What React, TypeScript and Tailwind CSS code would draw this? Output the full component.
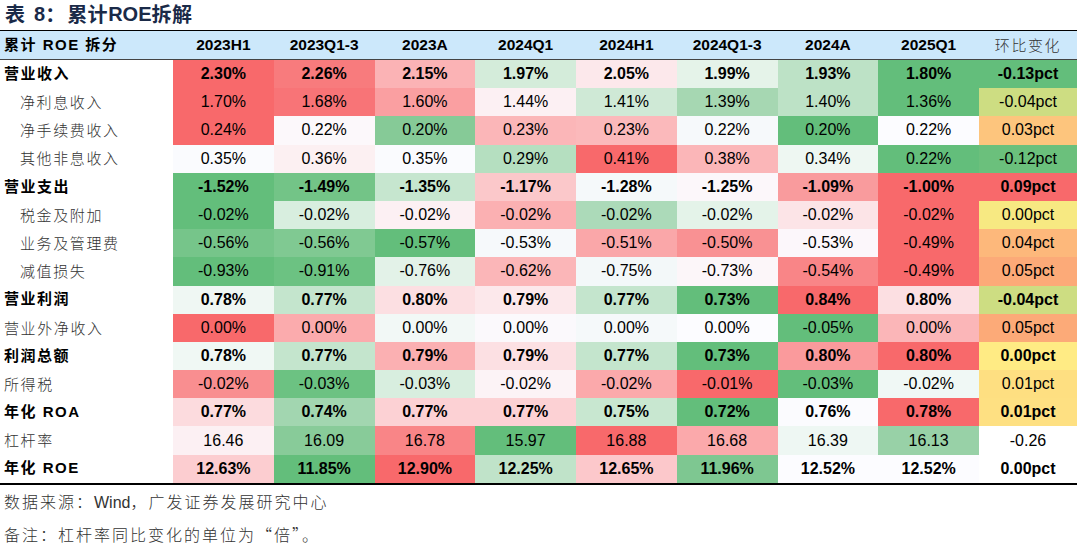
import React from 'react';

type Kind = 'bold' | 'sub' | 'plain';
type Cell = [string, string];
type Row = { label: string; kind: Kind; cells: Cell[] };

const COLUMNS = ['2023H1', '2023Q1-3', '2023A', '2024Q1', '2024H1', '2024Q1-3', '2024A', '2025Q1'];

// colours read off the Excel colour scale, one per cell
const ROWS: Row[] = [
  {
    label: '营业收入', kind: 'bold', cells: [
      ['2.30%', 'bg-[#f8696b]'], ['2.26%', 'bg-[#f87b7d]'], ['2.15%', 'bg-[#fbb3b5]'], ['1.97%', 'bg-[#d4ecda]'],
      ['2.05%', 'bg-[#fce8eb]'], ['1.99%', 'bg-[#e5f3e9]'], ['1.93%', 'bg-[#bde2c6]'], ['1.80%', 'bg-[#63be7b]'],
      ['-0.13pct', 'bg-[#63be7b]'],
    ],
  },
  {
    label: '净利息收入', kind: 'sub', cells: [
      ['1.70%', 'bg-[#f8696b]'], ['1.68%', 'bg-[#f87477]'], ['1.60%', 'bg-[#fa9fa1]'], ['1.44%', 'bg-[#fcf0f3]'],
      ['1.41%', 'bg-[#cfe9d6]'], ['1.39%', 'bg-[#a6d7b2]'], ['1.40%', 'bg-[#bde2c6]'], ['1.36%', 'bg-[#63be7b]'],
      ['-0.04pct', 'bg-[#cddd82]'],
    ],
  },
  {
    label: '净手续费收入', kind: 'sub', cells: [
      ['0.24%', 'bg-[#f8696b]'], ['0.22%', 'bg-[#fcf8fb]'], ['0.20%', 'bg-[#86ca97]'], ['0.23%', 'bg-[#fbb6b8]'],
      ['0.23%', 'bg-[#fbb9bb]'], ['0.22%', 'bg-[#f6f9fb]'], ['0.20%', 'bg-[#63be7b]'], ['0.22%', 'bg-[#fcfcff]'],
      ['0.03pct', 'bg-[#fdc57d]'],
    ],
  },
  {
    label: '其他非息收入', kind: 'sub', cells: [
      ['0.35%', 'bg-[#fafbfe]'], ['0.36%', 'bg-[#fcf0f2]'], ['0.35%', 'bg-[#fafbfe]'], ['0.29%', 'bg-[#b5dfc0]'],
      ['0.41%', 'bg-[#f8696b]'], ['0.38%', 'bg-[#fbb6b8]'], ['0.34%', 'bg-[#eef7f2]'], ['0.22%', 'bg-[#63be7b]'],
      ['-0.12pct', 'bg-[#6bc07c]'],
    ],
  },
  {
    label: '营业支出', kind: 'bold', cells: [
      ['-1.52%', 'bg-[#63be7b]'], ['-1.49%', 'bg-[#73c487]'], ['-1.35%', 'bg-[#c6e6cf]'], ['-1.17%', 'bg-[#fbc8ca]'],
      ['-1.28%', 'bg-[#f5f9fa]'], ['-1.25%', 'bg-[#fcf7fa]'], ['-1.09%', 'bg-[#f99b9d]'], ['-1.00%', 'bg-[#f8696b]'],
      ['0.09pct', 'bg-[#f8696b]'],
    ],
  },
  {
    label: '税金及附加', kind: 'sub', cells: [
      ['-0.02%', 'bg-[#63be7b]'], ['-0.02%', 'bg-[#d8eedf]'], ['-0.02%', 'bg-[#fcf0f3]'], ['-0.02%', 'bg-[#fbb0b2]'],
      ['-0.02%', 'bg-[#acdab9]'], ['-0.02%', 'bg-[#e4f3e9]'], ['-0.02%', 'bg-[#fce4e7]'], ['-0.02%', 'bg-[#f8696b]'],
      ['0.00pct', 'bg-[#f7e982]'],
    ],
  },
  {
    label: '业务及管理费', kind: 'sub', cells: [
      ['-0.56%', 'bg-[#76c58a]'], ['-0.56%', 'bg-[#80c992]'], ['-0.57%', 'bg-[#63be7b]'], ['-0.53%', 'bg-[#f6f9fb]'],
      ['-0.51%', 'bg-[#faa7a9]'], ['-0.50%', 'bg-[#f99193]'], ['-0.53%', 'bg-[#fcf7fb]'], ['-0.49%', 'bg-[#f8696b]'],
      ['0.04pct', 'bg-[#fdb87b]'],
    ],
  },
  {
    label: '减值损失', kind: 'sub', cells: [
      ['-0.93%', 'bg-[#63be7b]'], ['-0.91%', 'bg-[#6cc282]'], ['-0.76%', 'bg-[#e3f2e8]'], ['-0.62%', 'bg-[#fbb6b8]'],
      ['-0.75%', 'bg-[#f3f8f9]'], ['-0.73%', 'bg-[#fcf6f9]'], ['-0.54%', 'bg-[#f98587]'], ['-0.49%', 'bg-[#f8696b]'],
      ['0.05pct', 'bg-[#fcaa78]'],
    ],
  },
  {
    label: '营业利润', kind: 'bold', cells: [
      ['0.78%', 'bg-[#eff7f3]'], ['0.77%', 'bg-[#c4e5cd]'], ['0.80%', 'bg-[#fcdfe2]'], ['0.79%', 'bg-[#fce8eb]'],
      ['0.77%', 'bg-[#c4e5cd]'], ['0.73%', 'bg-[#63be7b]'], ['0.84%', 'bg-[#f8696b]'], ['0.80%', 'bg-[#fcdfe2]'],
      ['-0.04pct', 'bg-[#cddd82]'],
    ],
  },
  {
    label: '营业外净收入', kind: 'plain', cells: [
      ['0.00%', 'bg-[#f8696b]'], ['0.00%', 'bg-[#fbabad]'], ['0.00%', 'bg-[#f2f8f6]'], ['0.00%', 'bg-[#fbf9fc]'],
      ['0.00%', 'bg-[#f5f9fa]'], ['0.00%', 'bg-[#fcfcff]'], ['-0.05%', 'bg-[#63be7b]'], ['0.00%', 'bg-[#fbb6b8]'],
      ['0.05pct', 'bg-[#fcaa78]'],
    ],
  },
  {
    label: '利润总额', kind: 'bold', cells: [
      ['0.78%', 'bg-[#f0f8f4]'], ['0.77%', 'bg-[#c4e5cd]'], ['0.79%', 'bg-[#fbb0b2]'], ['0.79%', 'bg-[#fce0e3]'],
      ['0.77%', 'bg-[#c4e5cd]'], ['0.73%', 'bg-[#63be7b]'], ['0.80%', 'bg-[#fa9a9c]'], ['0.80%', 'bg-[#f8696b]'],
      ['0.00pct', 'bg-[#ffeb84]'],
    ],
  },
  {
    label: '所得税', kind: 'plain', cells: [
      ['-0.02%', 'bg-[#f98e90]'], ['-0.03%', 'bg-[#6cc282]'], ['-0.03%', 'bg-[#d8eedf]'], ['-0.02%', 'bg-[#fcf3f6]'],
      ['-0.02%', 'bg-[#fba9ab]'], ['-0.01%', 'bg-[#f8696b]'], ['-0.03%', 'bg-[#63be7b]'], ['-0.02%', 'bg-[#f0f8f5]'],
      ['0.01pct', 'bg-[#fedf81]'],
    ],
  },
  {
    label: '年化 ROA', kind: 'bold', cells: [
      ['0.77%', 'bg-[#fcdbde]'], ['0.74%', 'bg-[#a2d6b0]'], ['0.77%', 'bg-[#fcd1d4]'], ['0.77%', 'bg-[#fcd1d4]'],
      ['0.75%', 'bg-[#c8e7d0]'], ['0.72%', 'bg-[#63be7b]'], ['0.76%', 'bg-[#fbfbfe]'], ['0.78%', 'bg-[#f8696b]'],
      ['0.01pct', 'bg-[#fee082]'],
    ],
  },
  {
    label: '杠杆率', kind: 'plain', cells: [
      ['16.46', 'bg-[#fcf0f3]'], ['16.09', 'bg-[#88cb99]'], ['16.78', 'bg-[#f98587]'], ['15.97', 'bg-[#63be7b]'],
      ['16.88', 'bg-[#f8696b]'], ['16.68', 'bg-[#fba9ab]'], ['16.39', 'bg-[#eef7f3]'], ['16.13', 'bg-[#98d1a7]'],
      ['-0.26', 'bg-white'],
    ],
  },
  {
    label: '年化 ROE', kind: 'bold', cells: [
      ['12.63%', 'bg-[#fccdd0]'], ['11.85%', 'bg-[#63be7b]'], ['12.90%', 'bg-[#f8696b]'], ['12.25%', 'bg-[#c0e3c9]'],
      ['12.65%', 'bg-[#fcc8cb]'], ['11.96%', 'bg-[#7ec791]'], ['12.52%', 'bg-[#fcfcff]'], ['12.52%', 'bg-[#fcfcff]'],
      ['0.00pct', 'bg-white'],
    ],
  },
];

const GRID = 'grid grid-cols-[173px_repeat(8,100.75px)_98px]';
const CJK = "font-['Noto_Sans_CJK_SC',sans-serif]";
const NUM = "font-['Liberation_Sans','Noto_Sans_CJK_SC',sans-serif]";

function RowLabel({ row }: { row: Row }) {
  if (row.kind === 'bold') {
    return (
      <div className={`${NUM} flex items-center pl-[4px] text-[15px] font-bold tracking-[1.5px] text-black`}>
        {row.label}
      </div>
    );
  }
  return (
    <div
      className={`${CJK} flex items-center text-[15px] font-light tracking-[1.6px] text-[#333] ${
        row.kind === 'sub' ? 'pl-[20px]' : 'pl-[4px]'
      }`}
    >
      {row.label}
    </div>
  );
}

export default function App() {
  return (
    <div className="h-[545px] w-[1080px] overflow-hidden bg-white">
      <div className={`${CJK} flex h-[30px] items-center pl-[5px] pb-[3px] text-[20px] font-bold text-[#1a2a48]`}>
        <span>表</span>
        <span className="ml-[9px] font-['Liberation_Sans']">8</span>
        <span>：</span>
        <span className="ml-[2px] tracking-[0.5px]">累计</span>
        <span className="font-['Liberation_Sans']">ROE</span>
        <span className="tracking-[0.5px]">拆解</span>
      </div>

      <div className="w-[1077px]">
        <div className={`${GRID} h-[30px] border-t-[1.5px] border-b border-t-black border-b-[#444] bg-[#cce8fb]`}>
          <div className={`${NUM} flex items-center pl-[4px] text-[15px] font-bold tracking-[1.5px] text-black`}>
            累计 ROE 拆分
          </div>
          {COLUMNS.map(c => (
            <div key={c} className={`${NUM} flex items-center justify-center text-[15.5px] font-bold text-black`}>
              {c}
            </div>
          ))}
          <div className={`${CJK} flex items-center justify-center text-[15px] font-light tracking-[1.6px] text-[#333]`}>
            环比变化
          </div>
        </div>

        {ROWS.map(row => (
          <div key={row.label} className={`${GRID} h-[28.2px]`}>
            <RowLabel row={row} />
            {row.cells.map(([v, bg], i) => (
              <div
                key={i}
                className={`${NUM} ${bg} flex items-center justify-center text-[16px] text-black ${
                  row.kind === 'bold' ? 'font-bold' : 'text-[#1a1a1a]'
                }`}
              >
                {v}
              </div>
            ))}
          </div>
        ))}
        <div className="h-[2px] bg-black" />
      </div>

      <div className={`${CJK} pl-[4px] text-[16px] font-light tracking-[2px] text-[#333]`}>
        <div className="leading-[33px]">
          数据来源：<span className="font-['Liberation_Sans'] tracking-normal">Wind</span>，广发证券发展研究中心
        </div>
        <div className="mt-[6px] leading-[18px]">备注：杠杆率同比变化的单位为“倍”。</div>
      </div>
    </div>
  );
}
